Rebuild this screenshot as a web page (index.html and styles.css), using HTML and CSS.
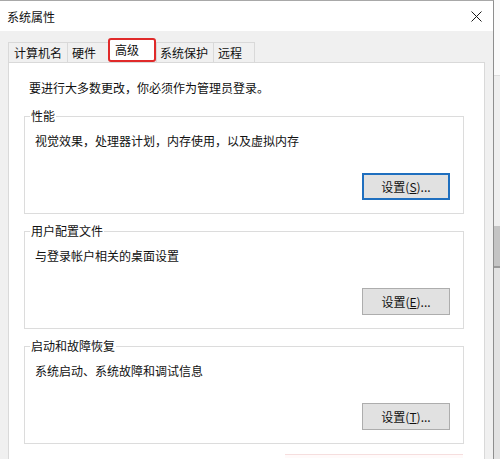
FILE: index.html
```html
<!DOCTYPE html>
<html lang="zh-CN">
<head>
<meta charset="utf-8">
<title>系统属性</title>
<link rel="stylesheet" href="styles.css">
</head>
<body>
<div class="screen">
  <div class="window">
    <div class="titlebar">
      <span class="title">系统属性</span>
      <svg class="close" width="11" height="11" viewBox="0 0 11 11" aria-label="关闭">
        <path d="M0.5 0.5 L10.5 10.5 M10.5 0.5 L0.5 10.5" stroke="#1a1a1a" stroke-width="1" fill="none"/>
      </svg>
    </div>
    <div class="body">
      <div class="tabs">
        <div class="tab tab-name">计算机名</div>
        <div class="tab tab-hw">硬件</div>
        <div class="tab tab-adv active">高级</div>
        <div class="tab tab-prot">系统保护</div>
        <div class="tab tab-remote">远程</div>
      </div>
      <div class="panel">
        <p class="intro">要进行大多数更改，你必须作为管理员登录。</p>
        <div class="group">
          <div class="legend">性能</div>
          <div class="desc">视觉效果，处理器计划，内存使用，以及虚拟内存</div>
          <button class="btn focused">设置(<u>S</u>)...</button>
        </div>
        <div class="group">
          <div class="legend">用户配置文件</div>
          <div class="desc">与登录帐户相关的桌面设置</div>
          <button class="btn">设置(<u>E</u>)...</button>
        </div>
        <div class="group">
          <div class="legend">启动和故障恢复</div>
          <div class="desc">系统启动、系统故障和调试信息</div>
          <button class="btn">设置(<u>T</u>)...</button>
        </div>
        <div class="mark"></div>
      </div>
    </div>
  </div>
  <div class="outside">
    <div class="o1"></div>
    <div class="o2"></div>
    <div class="o3"></div>
    <div class="o4"></div>
    <div class="o5"></div>
  </div>
</div>
</body>
</html>
```

FILE: styles.css
```css
html, body {
  margin: 0;
  padding: 0;
}

body {
  width: 500px;
  height: 459px;
  overflow: hidden;
  background: #fff;
  color: #111;
  font-family: "Noto Sans CJK SC", "Noto Sans", sans-serif;
  font-size: 12px;
}

.screen {
  display: flex;
  height: 459px;
}

.window {
  width: 493px;
  height: 458px;
  border-top: 1px solid #a8a8a8;
  border-right: 1px solid #8e8e8e;
  background: #f0f0f0;
  display: flex;
  flex-direction: column;
}

.titlebar {
  height: 30px;
  flex: none;
  background: #fff;
  display: flex;
  align-items: center;
  justify-content: space-between;
  padding: 0 11px 0 7px;
}

.title {
  line-height: 16px;
  padding-top: 1px;
}

.close {
  display: block;
  margin-top: 1px;
}

.body {
  flex: 1;
  display: flex;
  flex-direction: column;
  padding: 7px 8px 0 8px;
  min-height: 0;
}

.tabs {
  display: flex;
  align-items: flex-end;
  height: 24px;
  flex: none;
}

.tab {
  box-sizing: border-box;
  height: 20px;
  line-height: 19px;
  border-top: 1px solid #d9d9d9;
  border-left: 1px solid #d9d9d9;
  background: #f0f0f0;
  white-space: nowrap;
}

.tab-name {
  width: 59px;
  padding-left: 5px;
}

.tab-hw {
  width: 41px;
  padding-left: 4px;
}

.tab-adv {
  width: 48px;
  padding-left: 5px;
}

.tab-prot {
  width: 57px;
  padding-left: 3px;
}

.tab-remote {
  width: 42px;
  padding-left: 4px;
  border-right: 1px solid #d9d9d9;
}

.tab.active {
  height: 24px;
  line-height: 20px;
  background: #fff;
  border: 2px solid #e02a2a;
  border-radius: 3px;
}

.panel {
  flex: 1;
  background: #fff;
  border: 1px solid #d9d9d9;
  border-bottom: none;
  padding: 17px 20px 0 15px;
  min-height: 0;
  display: flex;
  flex-direction: column;
  align-items: flex-start;
}

.intro {
  margin: 0 0 3px 5px;
  line-height: 16px;
}

.group {
  box-sizing: border-box;
  flex: none;
  width: 440px;
  height: 98px;
  border: 1px solid #dcdcdc;
  margin-top: 17px;
  display: flex;
  flex-direction: column;
  align-items: flex-start;
}

.legend {
  margin: -9px 0 0 5px;
  padding: 0 1px;
  background: #fff;
  line-height: 16px;
}

.desc {
  margin: 9px 0 0 10px;
  line-height: 16px;
}

.btn {
  box-sizing: border-box;
  margin: auto 13px 13px auto;
  width: 88px;
  height: 27px;
  padding: 0;
  background: #e1e1e1;
  border: 1px solid #adadad;
  color: #111;
  font-family: "Noto Sans CJK SC", "Noto Sans", sans-serif;
  font-size: 12px;
  line-height: 16px;
}

.btn.focused {
  border: 2px solid #1f6fbf;
}

.mark {
  flex: none;
  margin: 10px 0 0 261px;
  width: 178px;
  height: 3px;
  border-top: 1px solid #f6dede;
  background: #fffafa;
}

.outside {
  flex: 1;
  display: flex;
  flex-direction: column;
}

.o1 {
  height: 75px;
  background: #fafafa;
}

.o2 {
  height: 150px;
  background: #eeeeee;
  border-top: 1px solid #dddddd;
}

.o3 {
  height: 40px;
  background: #c4c4c4;
}

.o4 {
  height: 2px;
  background: #999;
}

.o5 {
  flex: 1;
  background: #e2e2e2;
}
```
